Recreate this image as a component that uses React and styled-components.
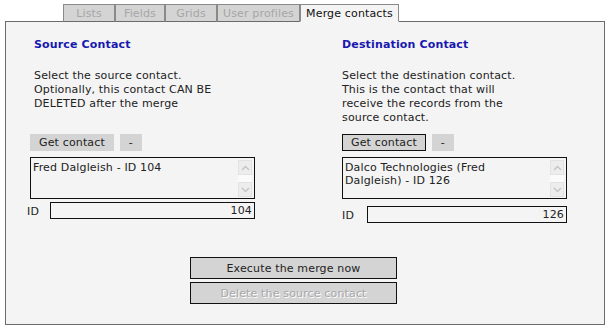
import React from "react";
import styled, { createGlobalStyle } from "styled-components";

// Estilos base de la pagina
const GlobalStyle = createGlobalStyle`
  body {
    margin: 0;
    background: #ffffff;
    font-family: "DejaVu Sans", Verdana, sans-serif;
    font-size: 11px;
    letter-spacing: 0.15px;
    color: #222222;
  }
`;

const Page = styled.div`
  padding: 4px 0 0 5px;
`;

// Pestañas superiores
const TabBar = styled.div`
  display: flex;
  margin-left: 58px;
  margin-bottom: -1px;
  position: relative;
  z-index: 1;
`;

const Tab = styled.div`
  box-sizing: border-box;
  height: 18px;
  width: ${(p) => p.$w}px;
  display: flex;
  align-items: center;
  justify-content: center;
  border: 1px solid #8a8a8a;
  border-bottom-color: ${(p) => (p.$active ? "#f4f4f4" : "#6b6b6b")};
  background: ${(p) => (p.$active ? "#f4f4f4" : "#d4d4d4")};
  color: ${(p) => (p.$active ? "#111111" : "#a6a6a6")};
`;

// Panel principal
const Panel = styled.div`
  box-sizing: border-box;
  width: 600px;
  height: 304px;
  border: 1px solid #6b6b6b;
  background: #f4f4f4;
  padding: 16px 0 0 24px;
`;

const Columns = styled.div`
  display: grid;
  grid-template-columns: 312px 225px;
`;

const Column = styled.div`
  display: flex;
  flex-direction: column;
`;

const Heading = styled.h2`
  margin: 0;
  padding-left: ${(p) => p.$indent}px;
  font-size: 11px;
  line-height: 14px;
  font-weight: bold;
  color: #1818b0;
`;

const Description = styled.p`
  margin: 17px 0 9px;
  padding-left: ${(p) => p.$indent}px;
  line-height: 14px;
  min-height: 56px;
`;

const ButtonRow = styled.div`
  display: flex;
  gap: 6px;
`;

const SmallButton = styled.button`
  box-sizing: border-box;
  height: 17px;
  padding: 0 ${(p) => (p.$narrow ? 7 : 8)}px;
  min-width: ${(p) => (p.$narrow ? 22 : 83)}px;
  border: 1px solid ${(p) => (p.$focused ? "#111111" : "#d4d4d4")};
  background: #d4d4d4;
  font-family: inherit;
  font-size: 11px;
  letter-spacing: inherit;
  line-height: 15px;
  color: #222222;
`;

// Caja de texto con barra de scroll
const TextBox = styled.div`
  box-sizing: border-box;
  margin-top: 6px;
  width: 225px;
  height: 42px;
  border: 1px solid #111111;
  background: #f4f4f4;
  display: flex;
`;

const TextContent = styled.div`
  flex: 1;
  padding: 3px 12px 0 2px;
  line-height: 13px;
`;

const ScrollBar = styled.div`
  width: 14px;
  margin: 2px 2px 1px 0;
  display: flex;
  flex-direction: column;
  justify-content: space-between;
  background: #fafafa;
`;

const ScrollArrow = styled.div`
  box-sizing: border-box;
  height: 15px;
  border: 1px solid #e2e2e2;
  background: #ededed;
  display: flex;
  align-items: center;
  justify-content: center;
`;

const IdRow = styled.div`
  display: flex;
  align-items: flex-end;
  margin-top: ${(p) => p.$gap}px;
  width: 225px;
`;

const IdLabel = styled.span`
  width: ${(p) => p.$w}px;
  margin-left: ${(p) => p.$shift}px;
  line-height: 14px;
`;

const IdInput = styled.div`
  box-sizing: border-box;
  flex: 1;
  height: 17px;
  border: 1px solid #111111;
  background: #f4f4f4;
  text-align: right;
  padding-right: 2px;
  line-height: 15px;
`;

// Botones inferiores
const ActionStack = styled.div`
  display: flex;
  flex-direction: column;
  gap: 3px;
  width: 207px;
  margin: 34px 0 0 160px;
`;

const ActionButton = styled.button`
  box-sizing: border-box;
  height: 22px;
  border: 1px solid #111111;
  background: #d4d4d4;
  font-family: inherit;
  font-size: 11px;
  letter-spacing: inherit;
  color: ${(p) => (p.disabled ? "#a8a8a8" : "#222222")};
  text-shadow: ${(p) => (p.disabled ? "1px 1px 0 #ffffff" : "none")};
`;

const Chevron = ({ up }) => (
  <svg width="9" height="6" viewBox="0 0 9 6">
    <polyline
      points={up ? "1,5 4.5,1.5 8,5" : "1,1 4.5,4.5 8,1"}
      fill="none"
      stroke="#c4c4c4"
      strokeWidth="1.4"
    />
  </svg>
);

const ContactBox = ({ children }) => (
  <TextBox>
    <TextContent>{children}</TextContent>
    <ScrollBar>
      <ScrollArrow>
        <Chevron up />
      </ScrollArrow>
      <ScrollArrow>
        <Chevron />
      </ScrollArrow>
    </ScrollBar>
  </TextBox>
);

const tabs = [
  { label: "Lists", w: 52 },
  { label: "Fields", w: 50 },
  { label: "Grids", w: 52 },
  { label: "User profiles", w: 83 },
];

export default function App() {
  return (
    <Page>
      <GlobalStyle />
      <TabBar>
        {tabs.map((t) => (
          <Tab key={t.label} $w={t.w}>
            {t.label}
          </Tab>
        ))}
        <Tab $w={99} $active>
          Merge contacts
        </Tab>
      </TabBar>
      <Panel>
        <Columns>
          <Column>
            <Heading $indent={4}>Source Contact</Heading>
            <Description $indent={4}>
              Select the source contact.
              <br />
              Optionally, this contact CAN BE
              <br />
              DELETED after the merge
            </Description>
            <ButtonRow>
              <SmallButton>Get contact</SmallButton>
              <SmallButton $narrow>-</SmallButton>
            </ButtonRow>
            <ContactBox>Fred Dalgleish - ID 104</ContactBox>
            <IdRow $gap={3}>
              <IdLabel $w={23} $shift={-3}>ID</IdLabel>
              <IdInput>104</IdInput>
            </IdRow>
          </Column>
          <Column>
            <Heading $indent={0}>Destination Contact</Heading>
            <Description $indent={0}>
              Select the destination contact.
              <br />
              This is the contact that will
              <br />
              receive the records from the
              <br />
              source contact.
            </Description>
            <ButtonRow>
              <SmallButton $focused>Get contact</SmallButton>
              <SmallButton $narrow>-</SmallButton>
            </ButtonRow>
            <ContactBox>Dalco Technologies (Fred Dalgleish) - ID 126</ContactBox>
            <IdRow $gap={7}>
              <IdLabel $w={25} $shift={0}>ID</IdLabel>
              <IdInput>126</IdInput>
            </IdRow>
          </Column>
        </Columns>
        <ActionStack>
          <ActionButton>Execute the merge now</ActionButton>
          <ActionButton disabled>Delete the source contact</ActionButton>
        </ActionStack>
      </Panel>
    </Page>
  );
}
